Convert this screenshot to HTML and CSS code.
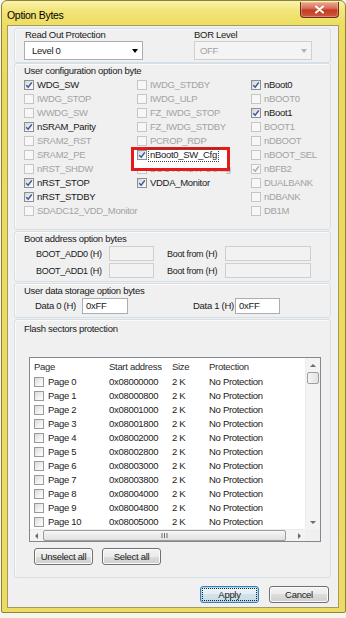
FILE: index.html
```html
<!DOCTYPE html>
<html>
<head>
<meta charset="utf-8">
<title>Option Bytes</title>
<link rel="stylesheet" href="styles.css">
</head>
<body>
<div class="window">
  <div class="titlebar">
    <span class="title">Option Bytes</span>
    <div class="close"><svg width="11" height="9" viewBox="0 0 11 9"><path d="M2 1.5 L9 7.5 M9 1.5 L2 7.5" stroke="#fff" stroke-width="2" stroke-linecap="round"/></svg></div>
  </div>
  <div class="client">
    <div class="group g-rop">
      <div class="fcol fcol-1">
        <div class="glabel glabel-in">Read Out Protection</div>
        <div class="combo"><span>Level 0</span><i class="arrow"></i></div>
      </div>
      <div class="fcol fcol-2">
        <div class="glabel">BOR Level</div>
        <div class="combo is-disabled"><span>OFF</span><i class="arrow"></i></div>
      </div>
    </div>

    <div class="group g-user">
      <div class="glabel">User configuration option byte</div>
      <div class="cfg">
        <div class="cfg-col">
          <div class="chk"><span class="box"><svg viewBox="0 0 8 8"><path d="M1.2 4.2 L3.2 6.2 L6.8 1.4"/></svg></span><span class="txt">WDG_SW</span></div>
          <div class="chk dis"><span class="box"></span><span class="txt">IWDG_STOP</span></div>
          <div class="chk dis"><span class="box"></span><span class="txt">WWDG_SW</span></div>
          <div class="chk"><span class="box"><svg viewBox="0 0 8 8"><path d="M1.2 4.2 L3.2 6.2 L6.8 1.4"/></svg></span><span class="txt">nSRAM_Parity</span></div>
          <div class="chk dis"><span class="box"></span><span class="txt">SRAM2_RST</span></div>
          <div class="chk dis"><span class="box"></span><span class="txt">SRAM2_PE</span></div>
          <div class="chk dis"><span class="box"></span><span class="txt">nRST_SHDW</span></div>
          <div class="chk"><span class="box"><svg viewBox="0 0 8 8"><path d="M1.2 4.2 L3.2 6.2 L6.8 1.4"/></svg></span><span class="txt">nRST_STOP</span></div>
          <div class="chk"><span class="box"><svg viewBox="0 0 8 8"><path d="M1.2 4.2 L3.2 6.2 L6.8 1.4"/></svg></span><span class="txt">nRST_STDBY</span></div>
          <div class="chk dis"><span class="box"></span><span class="txt">SDADC12_VDD_Monitor</span></div>
        </div>
        <div class="cfg-col">
          <div class="chk dis"><span class="box"></span><span class="txt">IWDG_STDBY</span></div>
          <div class="chk dis"><span class="box"></span><span class="txt">IWDG_ULP</span></div>
          <div class="chk dis"><span class="box"></span><span class="txt">FZ_IWDG_STOP</span></div>
          <div class="chk dis"><span class="box"></span><span class="txt">FZ_IWDG_STDBY</span></div>
          <div class="chk dis"><span class="box"></span><span class="txt">PCROP_RDP</span></div>
          <div class="chk hl"><span class="box"><svg viewBox="0 0 8 8"><path d="M1.2 4.2 L3.2 6.2 L6.8 1.4"/></svg></span><span class="txt focus">nBoot0_SW_Cfg</span></div>
          <div class="chk dis"><span class="box"></span><span class="txt">BOOT0 nSW Config</span></div>
          <div class="chk"><span class="box"><svg viewBox="0 0 8 8"><path d="M1.2 4.2 L3.2 6.2 L6.8 1.4"/></svg></span><span class="txt">VDDA_Monitor</span></div>
        </div>
        <div class="cfg-col">
          <div class="chk"><span class="box"><svg viewBox="0 0 8 8"><path d="M1.2 4.2 L3.2 6.2 L6.8 1.4"/></svg></span><span class="txt">nBoot0</span></div>
          <div class="chk dis"><span class="box"></span><span class="txt">nBOOT0</span></div>
          <div class="chk"><span class="box"><svg viewBox="0 0 8 8"><path d="M1.2 4.2 L3.2 6.2 L6.8 1.4"/></svg></span><span class="txt">nBoot1</span></div>
          <div class="chk dis"><span class="box"></span><span class="txt">BOOT1</span></div>
          <div class="chk dis"><span class="box"></span><span class="txt">nDBOOT</span></div>
          <div class="chk dis"><span class="box"></span><span class="txt">nBOOT_SEL</span></div>
          <div class="chk dis"><span class="box"><svg viewBox="0 0 8 8"><path d="M1.2 4.2 L3.2 6.2 L6.8 1.4"/></svg></span><span class="txt">nBFB2</span></div>
          <div class="chk dis"><span class="box"></span><span class="txt">DUALBANK</span></div>
          <div class="chk dis"><span class="box"></span><span class="txt">nDBANK</span></div>
          <div class="chk dis"><span class="box"></span><span class="txt">DB1M</span></div>
        </div>
      </div>
    </div>

    <div class="group g-boot">
      <div class="glabel">Boot address option bytes</div>
      <div class="addr-row">
        <span>BOOT_ADD0 (H)</span><span class="field is-disabled"></span>
        <span class="lbl2">Boot from (H)</span><span class="field is-disabled"></span>
      </div>
      <div class="addr-row">
        <span>BOOT_ADD1 (H)</span><span class="field is-disabled"></span>
        <span class="lbl2">Boot from (H)</span><span class="field is-disabled"></span>
      </div>
    </div>

    <div class="group g-data">
      <div class="glabel">User data storage option bytes</div>
      <div class="data-row">
        <span>Data 0 (H)</span><span class="field">0xFF</span>
        <span class="lbl2">Data 1 (H)</span><span class="field">0xFF</span>
      </div>
    </div>

    <div class="group g-flash">
      <div class="glabel">Flash sectors protection</div>
      <div class="lv">
        <div class="lv-body">
          <div class="lv-head">
            <span class="c c1">Page</span><span class="c c2">Start address</span><span class="c c3">Size</span><span class="c c4">Protection</span>
          </div>
          <div class="lv-row"><span class="c c1"><span class="box lbox"></span>Page 0</span><span class="c c2">0x08000000</span><span class="c c3">2 K</span><span class="c c4">No Protection</span></div>
          <div class="lv-row"><span class="c c1"><span class="box lbox"></span>Page 1</span><span class="c c2">0x08000800</span><span class="c c3">2 K</span><span class="c c4">No Protection</span></div>
          <div class="lv-row"><span class="c c1"><span class="box lbox"></span>Page 2</span><span class="c c2">0x08001000</span><span class="c c3">2 K</span><span class="c c4">No Protection</span></div>
          <div class="lv-row"><span class="c c1"><span class="box lbox"></span>Page 3</span><span class="c c2">0x08001800</span><span class="c c3">2 K</span><span class="c c4">No Protection</span></div>
          <div class="lv-row"><span class="c c1"><span class="box lbox"></span>Page 4</span><span class="c c2">0x08002000</span><span class="c c3">2 K</span><span class="c c4">No Protection</span></div>
          <div class="lv-row"><span class="c c1"><span class="box lbox"></span>Page 5</span><span class="c c2">0x08002800</span><span class="c c3">2 K</span><span class="c c4">No Protection</span></div>
          <div class="lv-row"><span class="c c1"><span class="box lbox"></span>Page 6</span><span class="c c2">0x08003000</span><span class="c c3">2 K</span><span class="c c4">No Protection</span></div>
          <div class="lv-row"><span class="c c1"><span class="box lbox"></span>Page 7</span><span class="c c2">0x08003800</span><span class="c c3">2 K</span><span class="c c4">No Protection</span></div>
          <div class="lv-row"><span class="c c1"><span class="box lbox"></span>Page 8</span><span class="c c2">0x08004000</span><span class="c c3">2 K</span><span class="c c4">No Protection</span></div>
          <div class="lv-row"><span class="c c1"><span class="box lbox"></span>Page 9</span><span class="c c2">0x08004800</span><span class="c c3">2 K</span><span class="c c4">No Protection</span></div>
          <div class="lv-row"><span class="c c1"><span class="box lbox"></span>Page 10</span><span class="c c2">0x08005000</span><span class="c c3">2 K</span><span class="c c4">No Protection</span></div>
        </div>
        <div class="vs">
          <div class="vs-btn"><i class="tri tri-up"></i></div>
          <div class="vs-thumb"></div>
          <div class="vs-track"></div>
          <div class="vs-btn"><i class="tri tri-down"></i></div>
        </div>
        <div class="hs">
          <div class="hs-btn"><i class="tri tri-left"></i></div>
          <div class="hs-thumb"><svg width="7" height="5" viewBox="0 0 7 5"><path d="M1 0 V5 M3.5 0 V5 M6 0 V5" stroke="#6d6d6d" stroke-width="1"/></svg></div>
          <div class="hs-track"></div>
          <div class="hs-btn"><i class="tri tri-right"></i></div>
        </div>
        <div class="corner"></div>
      </div>
      <div class="sel-row">
        <button class="btn">Unselect all</button>
        <button class="btn">Select all</button>
      </div>
    </div>

    <div class="footer">
      <button class="btn btn-default"><span class="focus-in">Apply</span></button>
      <button class="btn btn-cancel">Cancel</button>
    </div>
  </div>
</div>
</body>
</html>
```

FILE: styles.css
```css
* { box-sizing: border-box; }

body {
  margin: 0;
  width: 346px;
  height: 618px;
  overflow: hidden;
  background: #f6f5ee;
  font-family: "Liberation Sans", Arial, sans-serif;
  font-size: 9.5px;
  letter-spacing: -0.3px;
  line-height: 12px;
  color: #1a1a1a;
}

.window {
  width: 345px;
  height: 613px;
  margin-left: 1px;
  border: 1px solid #8f8238;
  border-radius: 6px 6px 2px 2px;
  background: linear-gradient(180deg, #fbf3ad 0, #f2e57c 9px, #eddd60 24px, #ead95b 80px, #ecdc64 100%);
  padding: 0 6px 4px 5px;
  display: flex;
  flex-direction: column;
}

.titlebar {
  height: 24px;
  display: flex;
  justify-content: space-between;
  align-items: flex-start;
}

.title {
  margin-top: 7px;
  font-size: 10.5px;
  line-height: 14px;
  color: #000;
}

.close {
  width: 39px;
  height: 16px;
  margin-top: 1px;
  border: 1px solid #6e2d22;
  border-top: none;
  border-radius: 0 0 4px 4px;
  background: linear-gradient(180deg, #eaa791 0, #d9735a 40%, #c23c22 55%, #cc5a40 100%);
  box-shadow: inset 0 0 0 1px rgba(255, 220, 200, 0.35);
  display: flex;
  align-items: center;
  justify-content: center;
}

.close svg { display: block; }

.client {
  height: 583px;
  border: 1px solid #a39a66;
  background: #f0f0f0;
  padding: 2px 7px 4px 6px;
  display: flex;
  flex-direction: column;
}

.group {
  border: 1px solid #d5dfe5;
  border-radius: 3px;
  box-shadow: inset 1px 1px 0 #fafafa;
  padding-left: 9px;
}

.glabel {
  height: 12px;
  line-height: 12px;
  white-space: nowrap;
}

.g-rop {
  height: 35px;
  display: flex;
  padding-bottom: 2px;
}

.fcol { display: flex; flex-direction: column; }
.fcol-1 { width: 119px; }
.fcol-2 { width: 118px; margin-left: 51px; }
.glabel-in { padding-left: 1px; }

.combo {
  height: 19px;
  border: 1px solid #abadb3;
  background: #fff;
  display: flex;
  align-items: center;
  justify-content: space-between;
  padding: 0 4px 0 7px;
}

.combo .arrow {
  width: 0;
  height: 0;
  border-left: 3.5px solid transparent;
  border-right: 3.5px solid transparent;
  border-top: 4px solid #000;
}

.combo.is-disabled {
  border-color: #d0d0d0;
  background: #f4f4f4;
  color: #a3a3a3;
  padding-left: 5px;
}

.combo.is-disabled .arrow { border-top-color: #b4b4b4; }

.g-user {
  height: 167px;
  padding-top: 1px;
}

.g-user .glabel { margin-bottom: 1px; }

.cfg { display: flex; }
.cfg-col { display: flex; flex-direction: column; }
.cfg-col:nth-child(1) { width: 113px; }
.cfg-col:nth-child(2) { width: 114px; }

.chk {
  height: 14px;
  display: flex;
  align-items: center;
  gap: 3px;
  white-space: nowrap;
}

.box {
  width: 10px;
  height: 10px;
  flex: none;
  border: 1px solid #8e8f8f;
  background: linear-gradient(135deg, #cfd3d8 0%, #eef0f2 60%, #fbfbfb 100%);
  display: flex;
  align-items: center;
  justify-content: center;
}

.box svg {
  width: 8px;
  height: 8px;
  display: block;
}

.box svg path {
  fill: none;
  stroke: #3c5596;
  stroke-width: 1.5;
}

.chk.dis { color: #a3a3a3; }
.chk.dis .box {
  border-color: #c6c6c6;
  background: #f7f7f7;
}
.chk.dis .box svg path { stroke: #a9a9a9; }

.chk.hl {
  position: relative;
  z-index: 0;
  width: max-content;
}

.chk.hl::before {
  content: "";
  position: absolute;
  left: -6px;
  top: -1px;
  width: 93px;
  height: 18px;
  border: 3px solid #e31b1b;
  background: #fff;
  z-index: -1;
}

.txt.focus {
  outline: 1px dotted #444;
  outline-offset: 0;
  padding: 0 1px;
  margin-left: -1px;
}

.g-boot {
  height: 51px;
  margin-top: 1px;
  padding-top: 1px;
}

.addr-row {
  height: 17px;
  display: grid;
  grid-template-columns: 73px 45px 71px 86px;
  align-items: center;
  padding-left: 12px;
  white-space: nowrap;
  font-size: 9px;
}

.lbl2 { padding-left: 13px; }

.field {
  height: 15px;
  border: 1px solid #abadb3;
  background: #fff;
  padding-left: 3px;
  line-height: 13px;
}

.field.is-disabled {
  border-color: #cfcfcf;
  background: #f2f2f2;
}

.g-data {
  height: 35px;
  margin-top: 1px;
  padding-top: 1px;
}

.data-row {
  height: 18px;
  display: grid;
  grid-template-columns: 47px 46px 107px 45px;
  align-items: center;
  padding-left: 11px;
  white-space: nowrap;
}

.data-row .lbl2 { padding-left: 65px; }
.data-row .field { height: 16px; line-height: 14px; }

.g-flash {
  height: 259px;
  margin-top: 1px;
  padding-top: 3px;
}

.lv {
  margin-top: 22px;
  margin-left: 5px;
  width: 292px;
  height: 185px;
  border: 1px solid #828790;
  background: #fff;
  display: grid;
  grid-template-columns: 275px 15px;
  grid-template-rows: 171px 12px;
}

.lv-body { overflow: hidden; }

.lv-head, .lv-row {
  display: grid;
  grid-template-columns: 73px 63px 37px 102px;
  align-items: center;
  white-space: nowrap;
}

.lv-head { height: 17px; color: #2b2b2b; }
.lv-row { height: 14px; }

.c1 { padding-left: 4px; display: flex; align-items: center; gap: 4px; }
.c2, .c3, .c4 { padding-left: 6px; }

.lbox {
  border-color: #9a9a9a;
  background: linear-gradient(135deg, #d8dadd 0%, #f3f3f3 60%, #fdfdfd 100%);
}

.vs {
  grid-column: 2;
  grid-row: 1;
  background: #f3f3f3;
  border-left: 1px solid #ececec;
  display: flex;
  flex-direction: column;
}

.vs-btn {
  height: 14px;
  display: flex;
  align-items: center;
  justify-content: center;
}

.vs-thumb {
  height: 12px;
  margin: 0 1px;
  border: 1px solid #9d9d9d;
  border-radius: 2px;
  background: linear-gradient(90deg, #f4f4f4, #e2e2e2);
}

.vs-track { flex: 1; }

.hs {
  grid-column: 1;
  grid-row: 2;
  background: #f3f3f3;
  border-top: 1px solid #ececec;
  display: flex;
  align-items: stretch;
}

.hs-btn {
  width: 12px;
  display: flex;
  align-items: center;
  justify-content: center;
}

.hs-thumb {
  width: 243px;
  margin: 0 0 0 1px;
  border: 1px solid #9d9d9d;
  border-radius: 2px;
  background: linear-gradient(180deg, #f6f6f6, #e0e0e0);
  display: flex;
  align-items: center;
  justify-content: center;
}

.hs-thumb svg { display: block; }
.hs-track { flex: 1; }

.corner { grid-column: 2; grid-row: 2; background: #f0f0f0; }

.tri { width: 0; height: 0; display: block; }
.tri-up { border-left: 3px solid transparent; border-right: 3px solid transparent; border-bottom: 3px solid #6b6b6b; }
.tri-down { border-left: 3px solid transparent; border-right: 3px solid transparent; border-top: 3px solid #6b6b6b; }
.tri-left { border-top: 3px solid transparent; border-bottom: 3px solid transparent; border-right: 3px solid #6b6b6b; }
.tri-right { border-top: 3px solid transparent; border-bottom: 3px solid transparent; border-left: 3px solid #6b6b6b; }

.sel-row {
  margin-top: 6px;
  padding-left: 10px;
  display: flex;
  gap: 9px;
}

.btn {
  width: 59px;
  height: 17px;
  padding: 0;
  border: 1px solid #707070;
  border-radius: 3px;
  background: linear-gradient(180deg, #f3f3f3 0%, #ebebeb 50%, #dddddd 50%, #cfcfcf 100%);
  box-shadow: inset 0 0 0 1px #fbfbfb;
  font-family: inherit;
  font-size: 9.5px;
  letter-spacing: -0.3px;
  line-height: 12px;
  color: #1a1a1a;
  display: flex;
  align-items: center;
  justify-content: center;
}

.footer {
  margin-top: 8px;
  padding-right: 2px;
  display: flex;
  justify-content: flex-end;
  gap: 10px;
}

.btn-cancel { width: 60px; }

.btn-default {
  border-color: #3c7fb1;
  background: linear-gradient(180deg, #eef5f9 0%, #e3edf3 50%, #d3e3ec 50%, #c8dbe6 100%);
  box-shadow: inset 0 0 0 1px #a9d6ef;
}

.focus-in {
  display: block;
  width: 53px;
  height: 11px;
  line-height: 11px;
  outline: 1px dotted #222;
  text-align: center;
}
```
